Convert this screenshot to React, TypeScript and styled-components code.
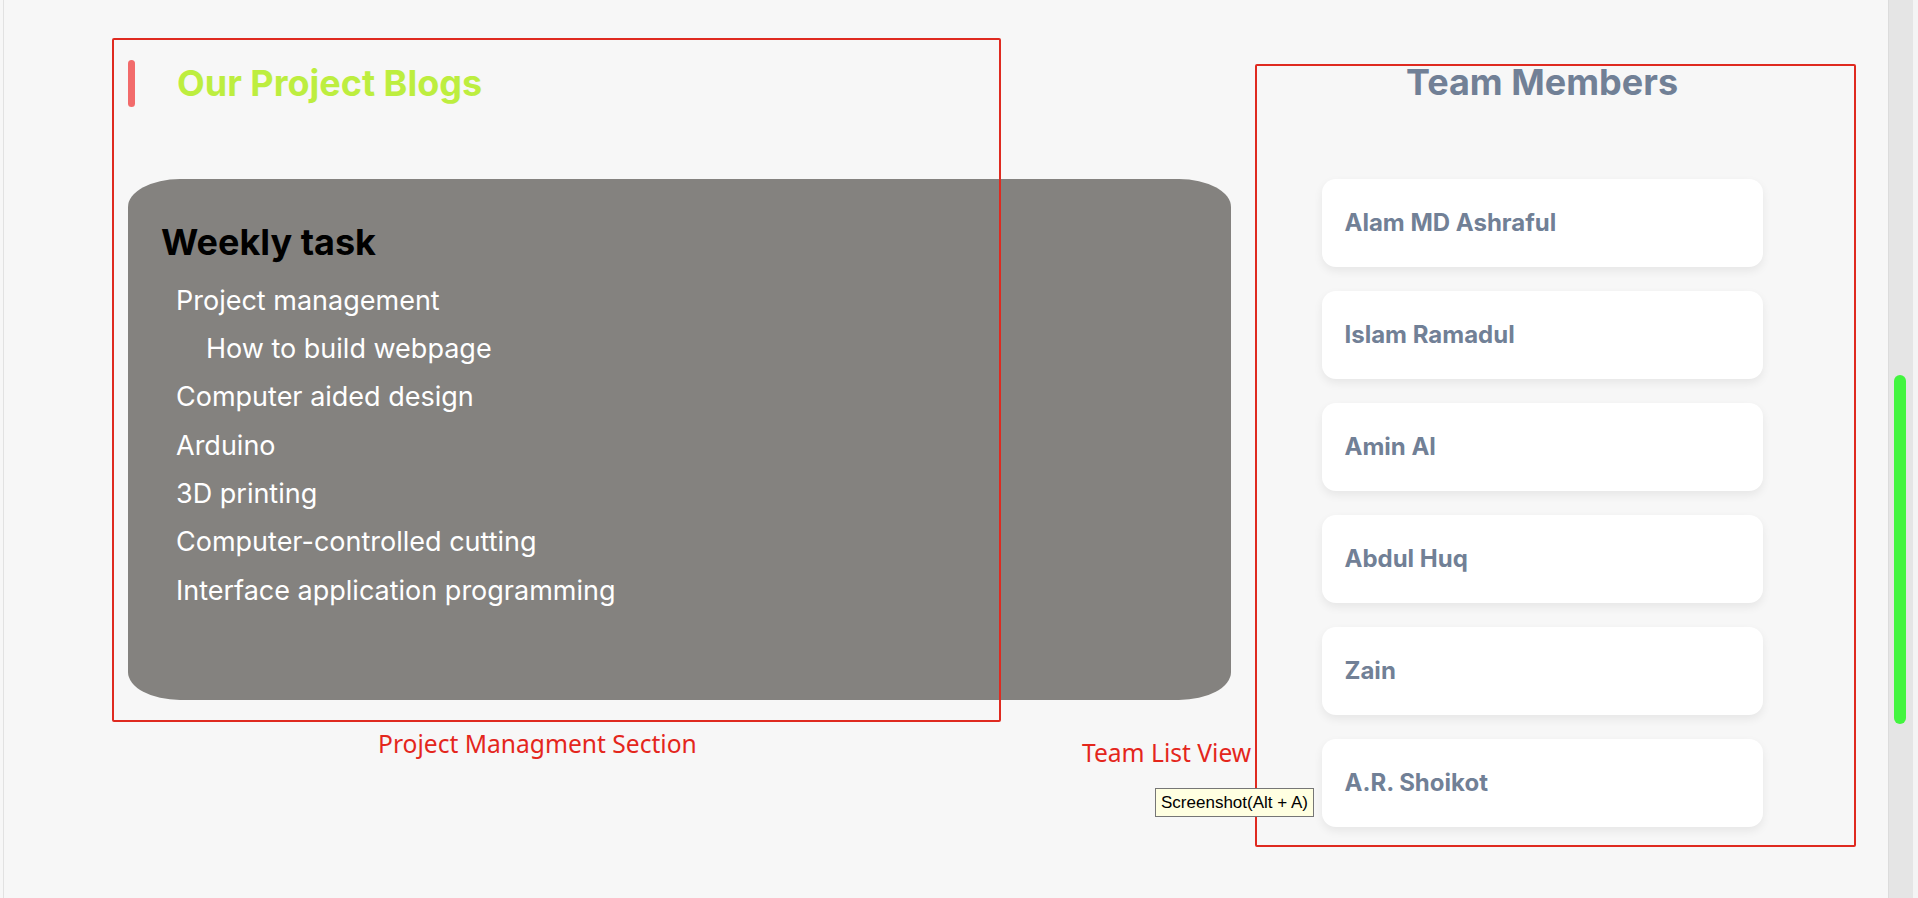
import React, { FunctionComponent } from "react";
import styled, { createGlobalStyle } from "styled-components";

// DATA //
type Task = { label: string; nested?: boolean };

const tasks: Task[] = [
    { label: "Project management" },
    { label: "How to build webpage", nested: true },
    { label: "Computer aided design" },
    { label: "Arduino" },
    { label: "3D printing" },
    { label: "Computer-controlled cutting" },
    { label: "Interface application programming" },
];

const members = [
    "Alam MD Ashraful",
    "Islam Ramadul",
    "Amin Al",
    "Abdul Huq",
    "Zain",
    "A.R. Shoikot",
];

const App: FunctionComponent = () => {
    return (
        <>
            <GlobalStyle />
            <Frame>
                <Main>
                    <ProjectSection>
                        <TitleRow>
                            <Accent />
                            <BlogTitle>Our Project Blogs</BlogTitle>
                        </TitleRow>
                        <TaskCard>
                            <TaskHeading>Weekly task</TaskHeading>
                            <TaskList>
                                {tasks.map((task) => (
                                    <TaskItem key={task.label} $nested={task.nested}>
                                        {task.label}
                                    </TaskItem>
                                ))}
                            </TaskList>
                        </TaskCard>
                    </ProjectSection>
                    <TeamSection>
                        <TeamTitle>Team Members</TeamTitle>
                        <MemberList>
                            {members.map((name) => (
                                <MemberCard key={name}>{name}</MemberCard>
                            ))}
                        </MemberList>
                    </TeamSection>
                </Main>
                <ScrollRail>
                    <ScrollThumb />
                </ScrollRail>
                <WindowEdge />

                {/* screenshot annotations drawn over the page */}
                <MarkBox $left={112} $top={38} $width={889} $height={684} />
                <MarkBox $left={1255} $top={64} $width={601} $height={783} />
                <MarkLabel $left={378} $top={727}>Project Managment Section</MarkLabel>
                <MarkLabel $left={1082} $top={736}>Team List View</MarkLabel>
                <Tip>Screenshot(Alt + A)</Tip>
            </Frame>
        </>
    );
};

// STYLED COMPONENTS //
const GlobalStyle = createGlobalStyle`
    html, body {
        margin: 0;
        padding: 0;
        height: 100%;
        overflow: hidden;
        background: #f7f7f7;
    }
    body {
        font-family: Inter, "Noto Sans", sans-serif;
    }
    #root {
        height: 100%;
    }
`;

const Frame = styled.div({
    position: "relative",
    display: "flex",
    height: "100vh",
    background: "#f7f7f7",
    overflow: "hidden",
});

const Main = styled.main({
    flex: 1,
    display: "grid",
    gridTemplateColumns: "1103px 1fr",
    alignItems: "start",
    marginLeft: 3,
    borderLeft: "1px solid #e2e2e2",
    paddingLeft: 124,
    paddingRight: 35,
});

const ProjectSection = styled.section({
    display: "flex",
    flexDirection: "column",
    paddingTop: 60,
});

const TitleRow = styled.div({
    display: "flex",
    alignItems: "center",
    gap: 42,
    height: 47,
});

const Accent = styled.span({
    width: 7,
    height: 47,
    borderRadius: 4,
    background: "#f26b6b",
});

const BlogTitle = styled.h1({
    margin: 0,
    fontSize: 36,
    fontWeight: 700,
    lineHeight: 1.21,
    color: "#bdee3f",
});

const TaskCard = styled.div({
    marginTop: 72,
    height: 521,
    boxSizing: "border-box",
    padding: "42px 33px",
    borderRadius: "52px / 28px",
    background: "#84827f",
});

const TaskHeading = styled.h2({
    margin: 0,
    fontSize: 36,
    fontWeight: 700,
    lineHeight: 1.21,
    color: "#000",
});

const TaskList = styled.ul({
    listStyle: "none",
    margin: "12px 0 0",
    padding: "0 0 0 15px",
});

const TaskItem = styled.li<{ $nested?: boolean }>((props) => ({
    fontSize: 27,
    lineHeight: "48.33px",
    color: "#fff",
    paddingLeft: props.$nested ? 30 : 0,
}));

const TeamSection = styled.section({
    display: "flex",
    flexDirection: "column",
    alignItems: "center",
    paddingTop: 61,
});

const TeamTitle = styled.h2({
    margin: 0,
    fontSize: 36,
    fontWeight: 700,
    lineHeight: 1.21,
    color: "#718096",
});

const MemberList = styled.div({
    display: "flex",
    flexDirection: "column",
    gap: 24,
    marginTop: 74,
});

const MemberCard = styled.div({
    width: 441,
    height: 88,
    boxSizing: "border-box",
    display: "flex",
    alignItems: "center",
    padding: "0 23px",
    borderRadius: 14,
    background: "#fff",
    boxShadow: "0 4px 10px rgba(0,0,0,.07)",
    fontSize: 24,
    fontWeight: 700,
    color: "#718096",
});

const ScrollRail = styled.div({
    width: 25,
    flexShrink: 0,
    boxSizing: "border-box",
    background: "#e5e5e5",
    borderLeft: "1px solid #dcdcdc",
    paddingTop: 375,
    paddingLeft: 5,
});

const ScrollThumb = styled.div({
    width: 12,
    height: 349,
    borderRadius: 6,
    background: "#42f53f",
});

const WindowEdge = styled.div({
    width: 5,
    flexShrink: 0,
    background: "#f4f4f4",
});

const MarkBox = styled.div<{ $left: number; $top: number; $width: number; $height: number }>((props) => ({
    position: "absolute",
    left: props.$left,
    top: props.$top,
    width: props.$width,
    height: props.$height,
    boxSizing: "border-box",
    border: "2px solid #df2a20",
    borderRadius: 2,
    pointerEvents: "none",
}));

const MarkLabel = styled.div<{ $left: number; $top: number }>((props) => ({
    position: "absolute",
    left: props.$left,
    top: props.$top,
    fontFamily: '"Noto Sans", sans-serif',
    fontSize: 24.6,
    lineHeight: 1.36,
    color: "#e4261c",
    whiteSpace: "nowrap",
}));

const Tip = styled.div({
    position: "absolute",
    left: 1155,
    top: 788,
    width: 159,
    height: 29,
    boxSizing: "border-box",
    display: "flex",
    alignItems: "center",
    justifyContent: "center",
    background: "#ffffe1",
    border: "1px solid #767676",
    fontFamily: '"Liberation Sans", sans-serif',
    fontSize: 17,
    color: "#000",
    whiteSpace: "nowrap",
});

export default App;
